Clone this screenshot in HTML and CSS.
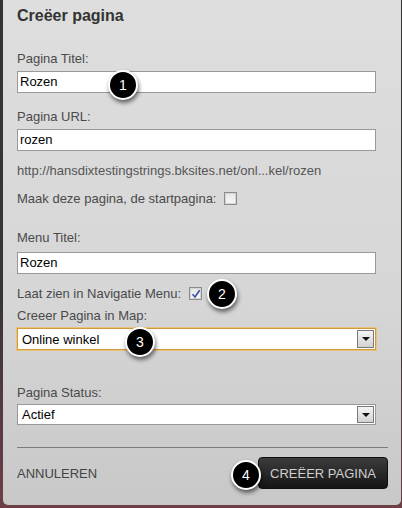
FILE: index.html
```html
<!DOCTYPE html>
<html lang="nl">
<head>
<meta charset="utf-8">
<title>Creëer pagina</title>
<link rel="stylesheet" href="styles.css">
</head>
<body>
<div class="dialog">
  <h1 class="title">Creëer pagina</h1>

  <div class="label gap-first">Pagina Titel:</div>
  <div class="input gap-ctl">Rozen</div>

  <div class="label gap-16">Pagina URL:</div>
  <div class="input gap-ctl">rozen</div>

  <div class="url gap-12">http://hansdixtestingstrings.bksites.net/onl...kel/rozen</div>

  <div class="check-row gap-13">
    <span>Maak deze pagina, de startpagina:</span>
    <span class="checkbox"></span>
  </div>

  <div class="label gap-24">Menu Titel:</div>
  <div class="input gap-7">Rozen</div>

  <div class="check-row gap-12">
    <span>Laat zien in Navigatie Menu:</span>
    <span class="checkbox checked">
      <svg viewBox="0 0 10 10" width="10" height="10"><path d="M1.5 5.2 L4 8 L8.6 1.2" fill="none" stroke="#3a4fa0" stroke-width="1.6"/></svg>
    </span>
  </div>

  <div class="label gap-7">Creeer Pagina in Map:</div>
  <div class="select focused gap-ctl">
    <span class="select-text">Online winkel</span>
    <span class="select-btn"><span class="caret"></span></span>
  </div>

  <div class="label gap-35">Pagina Status:</div>
  <div class="select short gap-4">
    <span class="select-text">Actief</span>
    <span class="select-btn"><span class="caret"></span></span>
  </div>

  <hr class="divider">

  <div class="footer">
    <span class="cancel">ANNULEREN</span>
    <button class="primary" type="button">CREËER PAGINA</button>
  </div>

  <span class="badge b1">1</span>
  <span class="badge b2">2</span>
  <span class="badge b3">3</span>
  <span class="badge b4">4</span>
</div>
</body>
</html>
```
FILE: styles.css
```css
html, body {
  margin: 0;
  padding: 0;
}

body {
  width: 402px;
  height: 508px;
  overflow: hidden;
  background: linear-gradient(#333 0%, #3a3535 60%, #6e3f47 100%);
  font-family: "Liberation Sans", Arial, sans-serif;
}

.dialog {
  position: relative;
  box-sizing: border-box;
  margin-left: 3px;
  width: 398px;
  height: 505px;
  padding: 6px 14px 0 14px;
  background: linear-gradient(#dedede 0%, #d6d6d6 60%, #c8c8c8 100%);
  border-radius: 0 0 5px 5px;
}

.title {
  margin: 0;
  font-size: 16px;
  line-height: 20px;
  font-weight: 700;
  color: #333;
}

.label,
.url,
.check-row {
  font-size: 13px;
  line-height: 15px;
  color: #4a4a4a;
}

.url { color: #555; }

.check-row {
  display: flex;
  align-items: center;
  gap: 8px;
}

.gap-first { margin-top: 25px; }
.gap-ctl { margin-top: 5px; }
.gap-4 { margin-top: 4px; }
.gap-7 { margin-top: 7px; }
.gap-12 { margin-top: 12px; }
.gap-13 { margin-top: 13px; }
.gap-16 { margin-top: 16px; }
.gap-24 { margin-top: 24px; }
.gap-35 { margin-top: 35px; }

.input {
  box-sizing: border-box;
  width: 359px;
  height: 22px;
  border: 1px solid #999;
  background: #fff;
  padding: 0 2px;
  font-size: 13px;
  line-height: 20px;
  color: #000;
}

.checkbox {
  box-sizing: border-box;
  width: 13px;
  height: 13px;
  border: 1px solid #8c8c8c;
  background: linear-gradient(#e6e6e6, #f8f8f8);
  box-shadow: inset 0 0 0 1px #d4d4d4;
  display: flex;
  align-items: center;
  justify-content: center;
}

.checkbox svg { display: block; }

.select {
  box-sizing: border-box;
  width: 359px;
  height: 22px;
  border: 1px solid #999;
  background: #fff;
  display: flex;
  align-items: center;
  justify-content: space-between;
  padding: 0 1px 0 4px;
  font-size: 13px;
  color: #000;
}

.select.short { height: 21px; }

.select.focused {
  border-color: #d39a3d;
  box-shadow: 0 0 0 1px #e9c27c;
}

.select-btn {
  box-sizing: border-box;
  width: 17px;
  height: 18px;
  border: 1px solid #7a7a7a;
  background: linear-gradient(#f4f4f4, #d2d2d2);
  display: flex;
  align-items: center;
  justify-content: center;
}

.select.short .select-btn { height: 17px; }

.caret {
  width: 0;
  height: 0;
  border-left: 4px solid transparent;
  border-right: 4px solid transparent;
  border-top: 4px solid #111;
}

.divider {
  margin: 22px 0 0 0;
  width: 371px;
  height: 0;
  border: 0;
  border-top: 1px solid #7a7a7a;
}

.footer {
  margin-top: 9px;
  width: 371px;
  display: flex;
  align-items: center;
  justify-content: space-between;
}

.cancel {
  font-size: 13px;
  color: #444;
}

.primary {
  box-sizing: border-box;
  width: 130px;
  height: 32px;
  border: 1px solid #0f0f0f;
  border-radius: 4px;
  background: linear-gradient(#3c3c3c, #151515);
  color: #cfcfcf;
  font-family: "Liberation Sans", Arial, sans-serif;
  font-size: 13px;
  padding: 0;
}

.badge {
  position: absolute;
  box-sizing: border-box;
  width: 30px;
  height: 30px;
  border-radius: 50%;
  border: 2px solid #fff;
  background: #000;
  color: #fff;
  font-size: 14px;
  line-height: 26px;
  text-align: center;
  box-shadow: 1px 3px 4px rgba(0, 0, 0, 0.55);
}

/* numbered callouts laid over the form fields */
.b1 { left: 105px; top: 70px; }
.b2 { left: 204px; top: 279px; }
.b3 { left: 122px; top: 327px; }
.b4 { left: 228px; top: 460px; }
```
